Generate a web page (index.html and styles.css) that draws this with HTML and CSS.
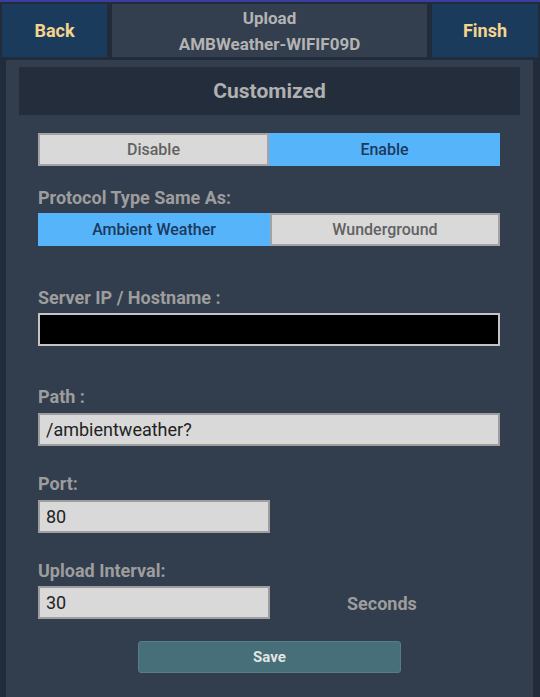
FILE: index.html
```html
<!DOCTYPE html>
<html>
<head>
<meta charset="utf-8">
<link rel="stylesheet" href="styles.css">
</head>
<body>
<div class="topbar">
  <div class="navbtn">Back</div>
  <div class="title">Upload<br>AMBWeather-WIFIF09D</div>
  <div class="navbtn finsh">Finsh</div>
</div>
<div class="panel">
  <div class="panel-head">Customized</div>
  <div class="content">
    <div class="seg seg-first">
      <div class="opt off">Disable</div>
      <div class="opt on">Enable</div>
    </div>
    <div class="label l-proto">Protocol Type Same As:</div>
    <div class="seg seg-proto">
      <div class="opt on">Ambient Weather</div>
      <div class="opt off">Wunderground</div>
    </div>
    <div class="label l-server">Server IP / Hostname :</div>
    <input class="field dark" value="">
    <div class="label l-path">Path :</div>
    <input class="field" value="/ambientweather?">
    <div class="label l-port">Port:</div>
    <input class="field short" value="80">
    <div class="label l-port">Upload Interval:</div>
    <div class="interval-row">
      <input class="field short" value="30">
      <span class="unit">Seconds</span>
    </div>
    <div class="save-row"><div class="save">Save</div></div>
  </div>
</div>
</body>
</html>
```
FILE: styles.css
```css
html, body {
  margin: 0;
  padding: 0;
  background: #222b39;
  font-family: Roboto, "Liberation Sans", sans-serif;
  height: 697px;
  overflow: hidden;
}
.topbar {
  border-top: 2px solid #3a3f9f;
  padding: 2px 2px 3px 2px;
  display: flex;
  gap: 5px;
  height: 53px;
}
.navbtn {
  width: 105px;
  background: #1b3b5d;
  color: #f6d48b;
  font-weight: bold;
  font-size: 18px;
  display: flex;
  align-items: center;
  justify-content: center;
}
.finsh { width: 106px; }
.title {
  flex: 1;
  background: #333e4e;
  color: #b3b3b3;
  font-weight: bold;
  font-size: 17px;
  line-height: 26px;
  text-align: center;
  padding-top: 1px;
}
.panel {
  margin-left: 6px;
  width: 527px;
  background: #323d4e;
  height: 637px;
  padding-top: 7px;
  box-sizing: border-box;
}
.panel-head {
  margin-left: 13px;
  width: 501px;
  height: 48px;
  background: #232d3c;
  color: #b0b0b0;
  font-weight: bold;
  font-size: 21px;
  display: flex;
  align-items: center;
  justify-content: center;
}
.content {
  padding: 0 33px 0 32px;
}
.seg {
  display: flex;
  height: 33px;
  margin-top: 18px;
}
.seg-proto { margin-top: 5px; }
.opt {
  box-sizing: border-box;
  display: flex;
  align-items: center;
  justify-content: center;
  font-size: 16px;
  font-weight: 500;
}
.seg-first .opt:first-child { width: 231px; }
.seg-first .opt:last-child { flex: 1; }
.seg-proto .opt:first-child { width: 232px; }
.seg-proto .opt:last-child { flex: 1; }
.opt.off {
  background: #d9d9d9;
  border: 2px solid #a3a3a3;
  color: #626262;
}
.opt.on {
  background: #56b4fb;
  color: #1c3a5c;
}
.label {
  color: #9d9d9d;
  font-weight: bold;
  font-size: 18px;
  line-height: 20px;
  height: 20px;
}
.l-proto { margin-top: 22px; }
.l-server { margin-top: 42px; }
.l-path { margin-top: 41px; }
.l-port { margin-top: 28px; }
.field {
  display: block;
  box-sizing: border-box;
  width: 462px;
  height: 33px;
  margin: 5px 0 0 0;
  padding: 0 6px;
  background: #d9d9d9;
  border: 2px solid #9e9e9e;
  border-radius: 0;
  font-family: Roboto, "Liberation Sans", sans-serif;
  font-size: 18px;
  color: #222;
  outline: none;
}
.l-path + .field, .l-port + .field { margin-top: 6px; }
.field.dark {
  background: #000;
  border-color: #c4c4c4;
}
.field.short { width: 232px; }
.interval-row {
  display: flex;
  align-items: center;
  margin-top: 5px;
}
.interval-row .field { margin-top: 0; }
.unit {
  margin-left: 77px;
  color: #9d9d9d;
  font-weight: bold;
  font-size: 18px;
  padding-top: 2px;
}
.save-row {
  margin-top: 22px;
  padding-left: 100px;
}
.save {
  box-sizing: border-box;
  width: 263px;
  height: 32px;
  background: #466f79;
  border: 1px solid #587d87;
  border-radius: 3px;
  color: #e4e4e4;
  font-weight: bold;
  font-size: 15px;
  display: flex;
  align-items: center;
  justify-content: center;
}
```
